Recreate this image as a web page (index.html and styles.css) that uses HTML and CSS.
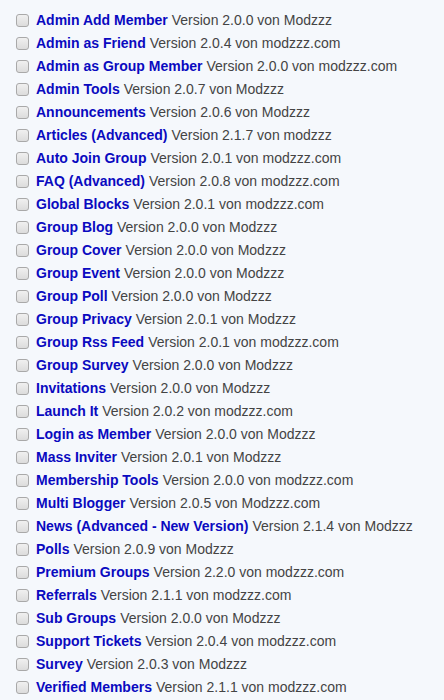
FILE: index.html
```html
<!DOCTYPE html>
<html lang="de">
<head>
  <meta charset="UTF-8" />
  <meta name="viewport" content="width=device-width, initial-scale=1.0"/>
  <title>Module</title>
  <link rel="stylesheet" href="styles.css">
</head>
<body>
  <ul class="modules">
    <li><input type="checkbox"><a href="#">Admin Add Member</a> Version 2.0.0 von Modzzz</li>
    <li><input type="checkbox"><a href="#">Admin as Friend</a> Version 2.0.4 von modzzz.com</li>
    <li><input type="checkbox"><a href="#">Admin as Group Member</a> Version 2.0.0 von modzzz.com</li>
    <li><input type="checkbox"><a href="#">Admin Tools</a> Version 2.0.7 von Modzzz</li>
    <li><input type="checkbox"><a href="#">Announcements</a> Version 2.0.6 von Modzzz</li>
    <li><input type="checkbox"><a href="#">Articles (Advanced)</a> Version 2.1.7 von modzzz</li>
    <li><input type="checkbox"><a href="#">Auto Join Group</a> Version 2.0.1 von modzzz.com</li>
    <li><input type="checkbox"><a href="#">FAQ (Advanced)</a> Version 2.0.8 von modzzz.com</li>
    <li><input type="checkbox"><a href="#">Global Blocks</a> Version 2.0.1 von modzzz.com</li>
    <li><input type="checkbox"><a href="#">Group Blog</a> Version 2.0.0 von Modzzz</li>
    <li><input type="checkbox"><a href="#">Group Cover</a> Version 2.0.0 von Modzzz</li>
    <li><input type="checkbox"><a href="#">Group Event</a> Version 2.0.0 von Modzzz</li>
    <li><input type="checkbox"><a href="#">Group Poll</a> Version 2.0.0 von Modzzz</li>
    <li><input type="checkbox"><a href="#">Group Privacy</a> Version 2.0.1 von Modzzz</li>
    <li><input type="checkbox"><a href="#">Group Rss Feed</a> Version 2.0.1 von modzzz.com</li>
    <li><input type="checkbox"><a href="#">Group Survey</a> Version 2.0.0 von Modzzz</li>
    <li><input type="checkbox"><a href="#">Invitations</a> Version 2.0.0 von Modzzz</li>
    <li><input type="checkbox"><a href="#">Launch It</a> Version 2.0.2 von modzzz.com</li>
    <li><input type="checkbox"><a href="#">Login as Member</a> Version 2.0.0 von Modzzz</li>
    <li><input type="checkbox"><a href="#">Mass Inviter</a> Version 2.0.1 von Modzzz</li>
    <li><input type="checkbox"><a href="#">Membership Tools</a> Version 2.0.0 von modzzz.com</li>
    <li><input type="checkbox"><a href="#">Multi Blogger</a> Version 2.0.5 von Modzzz.com</li>
    <li><input type="checkbox"><a href="#">News (Advanced - New Version)</a> Version 2.1.4 von Modzzz</li>
    <li><input type="checkbox"><a href="#">Polls</a> Version 2.0.9 von Modzzz</li>
    <li><input type="checkbox"><a href="#">Premium Groups</a> Version 2.2.0 von modzzz.com</li>
    <li><input type="checkbox"><a href="#">Referrals</a> Version 2.1.1 von modzzz.com</li>
    <li><input type="checkbox"><a href="#">Sub Groups</a> Version 2.0.0 von Modzzz</li>
    <li><input type="checkbox"><a href="#">Support Tickets</a> Version 2.0.4 von modzzz.com</li>
    <li><input type="checkbox"><a href="#">Survey</a> Version 2.0.3 von Modzzz</li>
    <li><input type="checkbox"><a href="#">Verified Members</a> Version 2.1.1 von modzzz.com</li>
  </ul>
</body>
</html>
```

FILE: styles.css
```css
body {
  margin: 0;
  background: #f5f8fc;
  font-family: "Liberation Sans", Arial, sans-serif;
  font-size: 14px;
  color: #444;
}
.modules {
  list-style: none;
  margin: 0;
  padding: 8px 0 0 16px;
}
.modules li {
  display: flex;
  align-items: center;
  height: 23px;
  white-space: nowrap;
}
.modules input[type="checkbox"] {
  appearance: none;
  -webkit-appearance: none;
  width: 13px;
  height: 13px;
  margin: 2px 7px 0 0;
  border: 1px solid #a9a9a9;
  border-radius: 3px;
  background: linear-gradient(#f0f0f0, #dcdcdc);
  flex-shrink: 0;
}
.modules a {
  color: #0a0ac0;
  font-weight: bold;
  text-decoration: none;
  margin-right: 4px;
}
```
